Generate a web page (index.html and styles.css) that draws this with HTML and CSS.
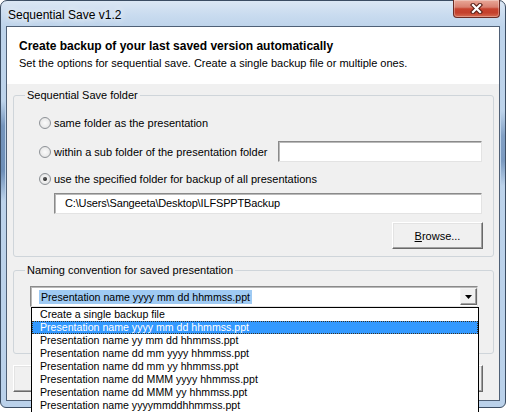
FILE: index.html
```html
<!DOCTYPE html>
<html lang="en">
<head>
<meta charset="utf-8">
<title>Sequential Save v1.2</title>
<link rel="stylesheet" href="styles.css">
</head>
<body>
<div class="window">
  <div class="titlebar">
    <span class="title">Sequential Save v1.2</span>
    <button class="close" type="button" aria-label="Close">
      <svg width="13" height="11" viewBox="0 0 13 11">
        <path d="M3 2 L10 9 M10 2 L3 9" stroke="#5b2119" stroke-width="4.4" stroke-linecap="square" fill="none"/>
        <path d="M3 2 L10 9 M10 2 L3 9" stroke="#ffffff" stroke-width="2.2" stroke-linecap="square" fill="none"/>
      </svg>
    </button>
  </div>

  <div class="client">
    <div class="header">
      <p class="headline">Create backup of your last saved version automatically</p>
      <p class="subline">Set the options for sequential save. Create a single backup file or multiple ones.</p>
    </div>

    <div class="body">
      <fieldset class="group group-folder">
        <legend>Sequential Save folder</legend>
        <div class="group-body">
          <label class="option"><span class="radio"></span>same folder as the presentation</label>
          <div class="option-row">
            <label class="option"><span class="radio"></span>within a sub folder of the presentation folder</label>
            <span class="field field-sub"></span>
          </div>
          <label class="option option-last"><span class="radio checked"></span>use the specified folder for backup of all presentations</label>
          <div class="field field-path">C:\Users\Sangeeta\Desktop\ILFSPPTBackup</div>
          <div class="actions">
            <button class="btn btn-browse" type="button"><u>B</u>rowse...</button>
          </div>
        </div>
      </fieldset>

      <fieldset class="group group-naming">
        <legend>Naming convention for saved presentation</legend>
        <div class="group-body naming-body">
          <div class="combo">
            <span class="combo-value"><span class="combo-sel">Presentation name yyyy mm dd hhmmss.ppt</span></span>
            <span class="combo-arrow">
              <svg width="7" height="4" viewBox="0 0 7 4"><polygon points="0,0 7,0 3.5,4" fill="#000"/></svg>
            </span>
            <ul class="combo-list">
              <li>Create a single backup file</li>
              <li class="selected">Presentation name yyyy mm dd hhmmss.ppt</li>
              <li>Presentation name yy mm dd hhmmss.ppt</li>
              <li>Presentation name dd mm yyyy hhmmss.ppt</li>
              <li>Presentation name dd mm yy hhmmss.ppt</li>
              <li>Presentation name dd MMM yyyy hhmmss.ppt</li>
              <li>Presentation name dd MMM yy hhmmss.ppt</li>
              <li>Presentation name yyyymmddhhmmss.ppt</li>
            </ul>
          </div>
        </div>
      </fieldset>

      <div class="footer">
        <button class="btn btn-footer" type="button">OK</button>
        <button class="btn btn-footer" type="button">Cancel</button>
      </div>
    </div>
  </div>
</div>
</body>
</html>
```

FILE: styles.css
```css
* {
  box-sizing: border-box;
}

html,
body {
  margin: 0;
}

body {
  width: 506px;
  height: 412px;
  overflow: hidden;
  background: #ffffff;
  font-family: "Liberation Sans", Arial, sans-serif;
  font-size: 11px;
  color: #000000;
}

/* Aero-style window frame */
.window {
  width: 506px;
  height: 408px;
  border: 1px solid #3b4d63;
  border-radius: 7px 7px 6px 6px;
  padding: 0 5px 6px;
  display: flex;
  flex-direction: column;
  background:
    linear-gradient(to bottom, transparent 100px, rgba(58, 98, 150, 0.55) 125px, rgba(58, 98, 150, 0.6) 170px, transparent 200px) left top / 4px 100% no-repeat,
    linear-gradient(to bottom, transparent 110px, rgba(58, 98, 150, 0.45) 135px, rgba(58, 98, 150, 0.5) 160px, transparent 185px) right top / 4px 100% no-repeat,
    linear-gradient(to bottom, #dbe7f4 0, #c9dbef 14px, #bed4eb 26px, #bad1ea 100%);
}

.titlebar {
  height: 25px;
  display: flex;
  align-items: flex-start;
  padding-left: 2px;
}

.title {
  margin-top: 7px;
  font-size: 12px;
  line-height: 15px;
  text-shadow: 0 0 6px #ffffff, 0 0 10px rgba(255, 255, 255, 0.8);
}

.close {
  margin-left: auto;
  margin-top: -1px;
  width: 47px;
  height: 18px;
  padding: 0;
  display: flex;
  align-items: center;
  justify-content: center;
  border: 1px solid #6b2b24;
  border-top: none;
  border-radius: 0 0 4px 4px;
  background: linear-gradient(to bottom, #e9a898 0%, #d98070 42%, #c7432f 52%, #c4402c 75%, #d66b52 100%);
  box-shadow: inset 0 0 0 1px rgba(255, 255, 255, 0.3);
}

/* Client area */
.client {
  flex: 1;
  display: flex;
  flex-direction: column;
  border: 1px solid #4f6076;
  background: #f0f0f0;
}

.header {
  background: #ffffff;
  padding: 12px 12px 14px;
}

.headline {
  margin: 0;
  font-size: 12px;
  font-weight: bold;
  line-height: 15px;
}

.subline {
  margin: 2px 0 0;
  line-height: 14px;
}

.body {
  flex: 1;
  display: flex;
  flex-direction: column;
  padding: 0 5px 0 6px;
}

/* Group boxes */
.group {
  margin: 0;
  padding: 0;
  min-width: 0;
  border: 1px solid #cfd5da;
  border-radius: 3px;
}

.group legend {
  margin-left: 11px;
  padding: 0 2px;
  line-height: 14px;
}

.group-folder {
  margin-top: 4px;
}

.group-naming {
  margin-top: 6px;
}

.group-body {
  display: flex;
  flex-direction: column;
  padding: 14px 10px 7px 25px;
}

.naming-body {
  padding: 9px 15px 46px 16px;
}

/* Radio options */
.option {
  display: flex;
  align-items: center;
  gap: 3px;
  height: 14px;
  line-height: 14px;
  white-space: nowrap;
}

.option-row {
  display: flex;
  align-items: center;
  height: 21px;
  margin-top: 11px;
}

.option-last {
  margin-top: 10px;
}

.radio {
  position: relative;
  flex: none;
  width: 12px;
  height: 12px;
  border: 1px solid #8e9297;
  border-radius: 50%;
  background: radial-gradient(circle at 50% 50%, #fbfbfb 0, #ececec 55%, #d4d4d4 100%);
}

.radio.checked::after {
  content: "";
  position: absolute;
  inset: 3px;
  border-radius: 50%;
  background: radial-gradient(circle at 40% 35%, #5c5c5c, #0e0e0e);
}

/* Sunken text fields */
.field {
  display: block;
  height: 21px;
  background: #ffffff;
  border: 1px solid;
  border-color: #8a8a8a #e3e3e3 #e3e3e3 #8a8a8a;
  box-shadow: inset 1px 1px 0 #b9b9b9;
}

.field-sub {
  width: 204px;
  margin-left: auto;
  margin-right: 1px;
}

.field-path {
  margin: 7px 1px 0 15px;
  padding-left: 10px;
  line-height: 19px;
  letter-spacing: -0.15px;
  white-space: nowrap;
}

.actions {
  display: flex;
  justify-content: flex-end;
  margin-top: 8px;
}

/* Classic push buttons */
.btn {
  height: 27px;
  width: 91px;
  padding: 0;
  font: inherit;
  color: #000000;
  background: #f0f0f0;
  border: 1px solid;
  border-color: #ffffff #696969 #696969 #ffffff;
  box-shadow: inset -1px -1px 0 #a0a0a0, inset 1px 1px 0 #e3e3e3;
}

.btn-footer {
  width: 80px;
}

/* Combo box with open list */
.combo {
  position: relative;
  display: flex;
  align-items: center;
  height: 21px;
  padding-left: 8px;
  background: #ffffff;
  border: 1px solid;
  border-color: #8a8a8a #e3e3e3 #e3e3e3 #8a8a8a;
  box-shadow: inset 1px 1px 0 #b9b9b9;
}

.combo-value {
  flex: 1;
  white-space: nowrap;
}

.combo-sel {
  display: inline-block;
  padding: 0 2px;
  font-size: 10.6px;
  line-height: 14px;
  background: #9fcaf3;
}

.combo-arrow {
  flex: none;
  width: 17px;
  height: 17px;
  display: flex;
  align-items: center;
  justify-content: center;
  background: #f0f0f0;
  border: 1px solid;
  border-color: #f4f4f4 #696969 #696969 #f4f4f4;
  box-shadow: inset -1px -1px 0 #a0a0a0;
}

.combo-list {
  position: absolute;
  left: 0;
  right: -2px;
  top: calc(100% + 1px);
  z-index: 2;
  margin: 0;
  padding: 0;
  list-style: none;
  background: #ffffff;
  border: 1px solid #000000;
}

.combo-list li {
  height: 13px;
  padding-left: 8px;
  font-size: 10.6px;
  line-height: 13px;
  white-space: nowrap;
}

.combo-list li.selected {
  background: #3399ff;
  color: #ffffff;
  outline: 1px dotted #3a3020;
  outline-offset: -1px;
}

.footer {
  display: flex;
  justify-content: space-between;
  margin-top: 11px;
  padding-right: 11px;
}
```
